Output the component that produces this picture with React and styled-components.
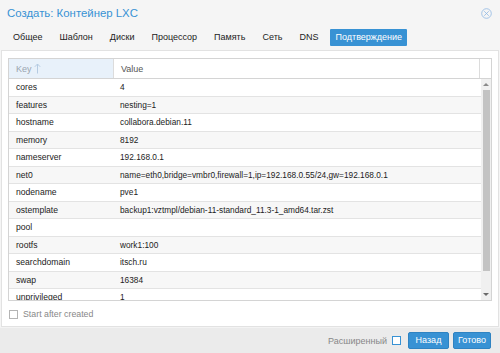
import styled, { createGlobalStyle } from "styled-components";

const GlobalStyle = createGlobalStyle`
  html, body {
    margin: 0;
    padding: 0;
    background: #f5f5f5;
  }
  * {
    box-sizing: border-box;
  }
`

const rows = [
  ['cores', '4'],
  ['features', 'nesting=1'],
  ['hostname', 'collabora.debian.11'],
  ['memory', '8192'],
  ['nameserver', '192.168.0.1'],
  ['net0', 'name=eth0,bridge=vmbr0,firewall=1,ip=192.168.0.55/24,gw=192.168.0.1'],
  ['nodename', 'pve1'],
  ['ostemplate', 'backup1:vztmpl/debian-11-standard_11.3-1_amd64.tar.zst'],
  ['pool', ''],
  ['rootfs', 'work1:100'],
  ['searchdomain', 'itsch.ru'],
  ['swap', '16384'],
  ['unprivileged', '1'],
]

const tabs = ['Общее', 'Шаблон', 'Диски', 'Процессор', 'Память', 'Сеть', 'DNS', 'Подтверждение']

function CloseIcon() {
  return (
    <svg width="11" height="11" viewBox="0 0 22 22">
      <circle cx="11" cy="11" r="9.6" fill="none" stroke="#8fb8e3" strokeWidth="1.6"/>
      <path d="M7 7 L15 15 M15 7 L7 15" stroke="#8fb8e3" strokeWidth="1.6" strokeLinecap="round"/>
    </svg>
  )
}

function SortUp() {
  return (
    <svg width="7" height="11" viewBox="0 0 7 11">
      <path d="M3.5 1 V10.5 M0.8 3.8 L3.5 1 L6.2 3.8" fill="none" stroke="#b5cbe2" strokeWidth="1"/>
    </svg>
  )
}

function App() {
  return (
    <>
      <GlobalStyle/>
      <Window>
        <TitleBar>
          <Title>Создать: Контейнер LXC</Title>
          <CloseIcon/>
        </TitleBar>
        <TabBar>
          {tabs.map((t, i) => (
            <Tab key={t} active={i === tabs.length - 1}>{t}</Tab>
          ))}
        </TabBar>
        <Panel>
          <Grid>
            <GridHeader>
              <HeadCell sorted width="105px">Key <SortUp/></HeadCell>
              <HeadCell width="auto" grow>Value</HeadCell>
              <HeadCell width="11px" last/>
            </GridHeader>
            <GridBody>
              <RowList>
                {rows.map(([k, v], i) => (
                  <Row key={k} odd={i % 2 === 1}>
                    <KeyCell>{k}</KeyCell>
                    <ValueCell>{v}</ValueCell>
                  </Row>
                ))}
              </RowList>
              <ScrollBar>
                <ArrowUp/>
                <Thumb/>
                <ArrowDown/>
              </ScrollBar>
            </GridBody>
          </Grid>
          <CheckRow>
            <Check/>
            <CheckLabel>Start after created</CheckLabel>
          </CheckRow>
        </Panel>
        <Footer>
          <FooterLabel>Расширенный</FooterLabel>
          <Check blue/>
          <Buttons>
            <Button width="41px">Назад</Button>
            <Button width="38px">Готово</Button>
          </Buttons>
        </Footer>
      </Window>
    </>
  )
}

const Window = styled.div`
  width: 500px;
  height: 353px;
  display: flex;
  flex-direction: column;
  background: #f5f5f5;
  font-family: "Liberation Sans", Arial, sans-serif;
  font-size: 9px;
  color: #222;
  overflow: hidden;
`

const TitleBar = styled.div`
  height: 26px;
  display: flex;
  align-items: center;
  justify-content: space-between;
  padding: 0 8px 0 7px;
`

const Title = styled.div`
  color: #3892d4;
  font-size: 11.4px;
`

const TabBar = styled.div`
  display: flex;
  align-items: center;
  height: 18px;
  margin-top: 2px;
  padding-left: 8px;
  gap: 7px;
`

const Tab = styled.div`
  height: 17px;
  line-height: 17px;
  padding: 0 5px;
  border-radius: 1px;
  background: ${p => p.active ? '#3892d4' : 'transparent'};
  color: ${p => p.active ? '#fff' : '#222'};
`

const Panel = styled.div`
  flex: 1;
  margin: 4px 1px 0 1px;
  background: #fff;
  border: 1px solid #e2e2e2;
  padding: 7px 6px 0 6px;
`

const Grid = styled.div`
  height: 243px;
  border: 1px solid #d4d4d4;
  display: flex;
  flex-direction: column;
`

const GridHeader = styled.div`
  display: flex;
  height: 20px;
  border-bottom: 1px solid #d4d4d4;
`

const HeadCell = styled.div`
  width: ${p => p.width};
  flex: ${p => p.grow ? 1 : 'none'};
  display: flex;
  align-items: center;
  gap: 2px;
  padding-left: 7px;
  color: ${p => p.sorted ? '#9aa5b0' : '#555'};
  background: ${p => p.sorted ? '#e8f1fa' : '#fff'};
  border-right: ${p => p.last ? 'none' : '1px solid #dcdcdc'};
`

const GridBody = styled.div`
  flex: 1;
  display: flex;
  overflow: hidden;
`

const RowList = styled.div`
  flex: 1;
  overflow: hidden;
  font-size: 8.3px;
`

const Row = styled.div`
  display: flex;
  align-items: center;
  height: 17.5px;
  border-bottom: 1px solid #e3e3e3;
  background: ${p => p.odd ? '#f7f7f7' : '#fff'};
`

const KeyCell = styled.div`
  width: 104px;
  padding-left: 7px;
  font-size: 8.6px;
`

const ValueCell = styled.div`
  flex: 1;
  padding-left: 7px;
  white-space: nowrap;
`

const ScrollBar = styled.div`
  width: 10px;
  background: #f0f0f0;
  display: flex;
  flex-direction: column;
  align-items: center;
  padding: 4px 0 4px;
`

const ArrowUp = styled.div`
  width: 0;
  height: 0;
  border-left: 3px solid transparent;
  border-right: 3px solid transparent;
  border-bottom: 3px solid #8a8a8a;
  margin-bottom: 4px;
`

const ArrowDown = styled.div`
  width: 0;
  height: 0;
  border-left: 3px solid transparent;
  border-right: 3px solid transparent;
  border-top: 3px solid #6a6a6a;
  margin-top: auto;
`

const Thumb = styled.div`
  width: 7px;
  height: 181px;
  background: #c3c3c3;
`

const CheckRow = styled.div`
  display: flex;
  align-items: center;
  gap: 5px;
  margin-top: 8px;
  padding-left: 1px;
`

const Check = styled.div`
  width: 9px;
  height: 9px;
  background: #fff;
  border: 1px solid ${p => p.blue ? '#3892d4' : '#b4b4b4'};
`

const CheckLabel = styled.div`
  color: #888;
  font-size: 8.8px;
`

const Footer = styled.div`
  height: 26px;
  display: flex;
  align-items: center;
  justify-content: flex-end;
  gap: 5px;
  padding-right: 9px;
  background: #ebebeb;
  border-top: 1px solid #f3f3f3;
`

const FooterLabel = styled.div`
  color: #888;
`

const Buttons = styled.div`
  display: flex;
  gap: 4px;
  margin-left: 2px;
`

const Button = styled.div`
  width: ${p => p.width};
  height: 17px;
  line-height: 15px;
  text-align: center;
  background: #3892d4;
  border: 1px solid #2f83c2;
  border-radius: 2px;
  color: #fff;
`

export default App
